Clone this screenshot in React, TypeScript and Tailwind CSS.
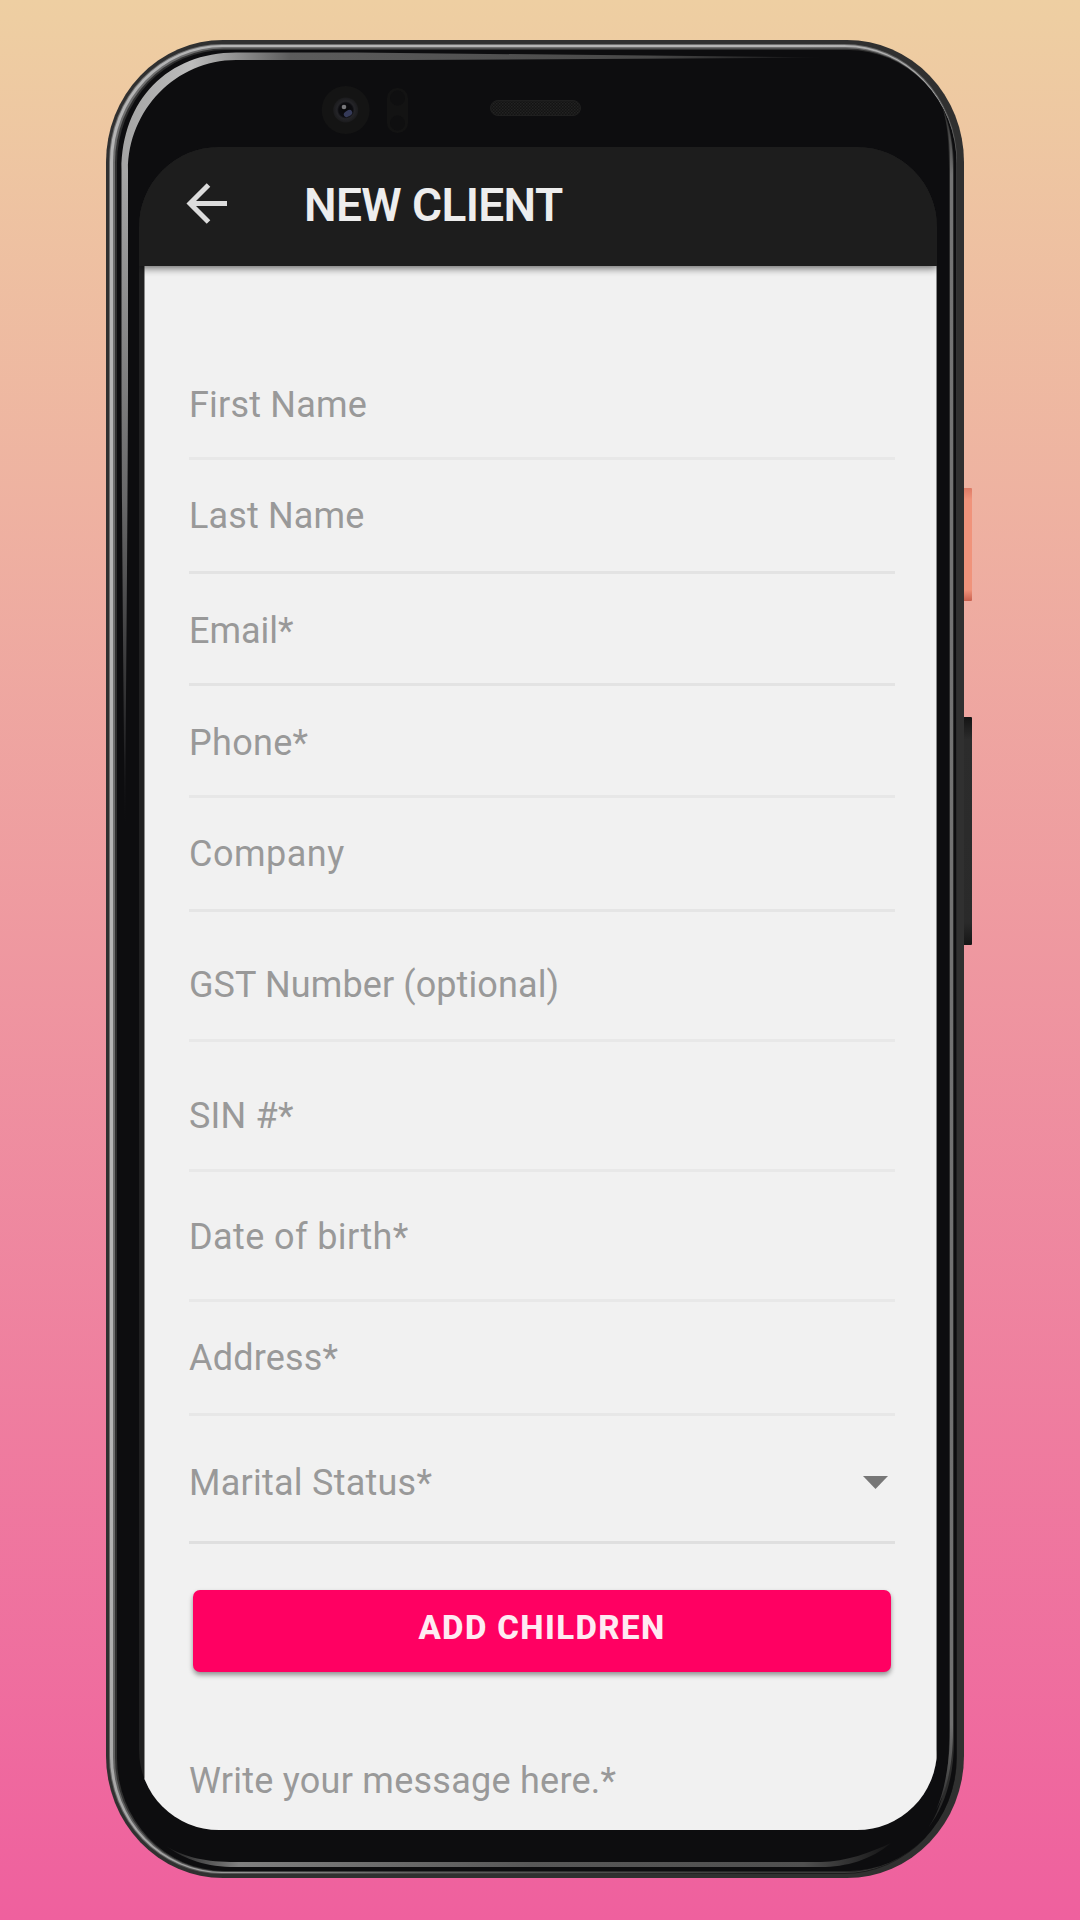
import React from 'react';

type Field = { label: string; row: string; text: string; select?: boolean };

const fields: Field[] = [
  { label: 'First Name', row: 'h-[194px] pb-[31px] border-[#e8e8e8]', text: 'tracking-[0.2px]' },
  { label: 'Last Name', row: 'h-[114px] pb-[34px] border-[#e3e3e3]', text: 'tracking-[0.15px]' },
  { label: 'Email*', row: 'h-[112px] pb-[31px] border-[#e3e3e3]', text: 'tracking-[0px]' },
  { label: 'Phone*', row: 'h-[112px] pb-[31px] border-[#e7e7e7]', text: 'tracking-[0.3px]' },
  { label: 'Company', row: 'h-[114px] pb-[34px] border-[#e5e5e5]', text: 'tracking-[0.5px]' },
  { label: 'GST Number (optional)', row: 'h-[130px] pb-[33px] border-[#e8e8e8]', text: 'tracking-[0.1px]' },
  { label: 'SIN #*', row: 'h-[130px] pb-[32px] border-[#e8e8e8]', text: 'tracking-[0.2px]' },
  { label: 'Date of birth*', row: 'h-[130px] pb-[41px] border-[#e8e8e8]', text: 'tracking-[0.4px]' },
  { label: 'Address*', row: 'h-[114px] pb-[34px] border-[#e7e7e7]', text: 'tracking-[0.2px]' },
  { label: 'Marital Status*', row: 'h-[128px] pb-[37px] border-[#dfdfdf]', text: 'tracking-[0.25px]', select: true },
];

function PhoneShell() {
  return (
    <svg className="absolute inset-0 h-full w-full overflow-visible" viewBox="0 0 858 1838" fill="none">
      <defs>
        <linearGradient id="rimLight" x1="0" y1="1400" x2="700" y2="1750" gradientUnits="userSpaceOnUse">
          <stop offset="0" stopColor="#b4b4b4" />
          <stop offset=".35" stopColor="#a0a0a0" />
          <stop offset=".6" stopColor="#626262" />
          <stop offset="1" stopColor="#3c3c3c" />
        </linearGradient>
        <linearGradient id="rimMid" x1="0" y1="1400" x2="700" y2="1750" gradientUnits="userSpaceOnUse">
          <stop offset="0" stopColor="#6e6e6e" />
          <stop offset=".5" stopColor="#505050" />
          <stop offset="1" stopColor="#1c1c1c" />
        </linearGradient>
        <linearGradient id="glowTop" x1="15" y1="0" x2="722" y2="0" gradientUnits="userSpaceOnUse">
          <stop offset="0" stopColor="#a4a4a4" />
          <stop offset=".1" stopColor="#bcbcbc" />
          <stop offset=".24" stopColor="#5c5c5c" />
          <stop offset=".75" stopColor="#484848" />
          <stop offset="1" stopColor="#0d0d0f" />
        </linearGradient>
        <linearGradient id="glowFade" x1="0" y1="130" x2="0" y2="790" gradientUnits="userSpaceOnUse">
          <stop offset="0" stopColor="#0d0d0f" stopOpacity="0" />
          <stop offset=".5" stopColor="#0d0d0f" stopOpacity=".4" />
          <stop offset="1" stopColor="#0d0d0f" />
        </linearGradient>
        <linearGradient id="glowRight" x1="0" y1="66" x2="0" y2="1788" gradientUnits="userSpaceOnUse">
          <stop offset="0" stopColor="#2a2a2a" />
          <stop offset=".04" stopColor="#747474" />
          <stop offset=".94" stopColor="#707070" />
          <stop offset=".97" stopColor="#484848" />
          <stop offset="1" stopColor="#1a1a1b" />
        </linearGradient>
        <linearGradient id="glowBottom" x1="60" y1="0" x2="785" y2="0" gradientUnits="userSpaceOnUse">
          <stop offset="0" stopColor="#1a1a1b" />
          <stop offset=".1" stopColor="#808080" />
          <stop offset=".5" stopColor="#585858" />
          <stop offset=".88" stopColor="#505050" />
          <stop offset="1" stopColor="#141415" />
        </linearGradient>
        <linearGradient id="powerKey" x1="0" y1="448" x2="0" y2="561" gradientUnits="userSpaceOnUse">
          <stop offset="0" stopColor="#de7b66" />
          <stop offset=".1" stopColor="#f0937b" />
          <stop offset=".9" stopColor="#f0937b" />
          <stop offset="1" stopColor="#c9604f" />
        </linearGradient>
        <linearGradient id="volumeKey" x1="0" y1="677" x2="0" y2="905" gradientUnits="userSpaceOnUse">
          <stop offset="0" stopColor="#141414" />
          <stop offset=".1" stopColor="#2c2c2c" />
          <stop offset=".9" stopColor="#2a2a2a" />
          <stop offset="1" stopColor="#161616" />
        </linearGradient>
        <radialGradient id="lens">
          <stop offset="0" stopColor="#08080a" />
          <stop offset=".55" stopColor="#0c0c10" />
          <stop offset=".7" stopColor="#242428" />
          <stop offset="1" stopColor="#1b1b1d" />
        </radialGradient>
        <pattern id="mesh" width="3" height="3" patternUnits="userSpaceOnUse">
          <rect width="3" height="3" fill="#131313" />
          <rect width="1.5" height="1.5" fill="#232323" />
          <rect x="1.5" y="1.5" width="1.5" height="1.5" fill="#1f1f1f" />
        </pattern>
      </defs>

      <rect x="857" y="448" width="9" height="113" rx="1" fill="url(#powerKey)" />
      <rect x="857" y="677" width="9" height="228" rx="1" fill="url(#volumeKey)" />

      <rect width="858" height="1838" rx="117" ry="122" fill="#303030" />
      <rect x="3" y="4" width="848" height="1830" rx="113" ry="118" fill="url(#rimMid)" />
      <rect x="4" y="5" width="846" height="1828" rx="112" ry="117" fill="url(#rimLight)" />
      <rect x="7" y="7" width="842.500" height="1825" rx="110" ry="115" fill="url(#rimMid)" />
      <rect x="9" y="8.500" width="841" height="1823" rx="109" ry="114" fill="#303030" />
      <rect x="11" y="10" width="839.500" height="1821" rx="108" ry="113" fill="#0d0d0f" />

      <path d="M19 790C17 600 16 500 15.500 350V130C15.500 60 62 12.500 130 12.500H250L722 17.500L300 20H130C70 20 22 70 22 130V350C21.500 500 20 650 19 790Z" fill="url(#glowTop)" />
      <rect x="14" y="130" width="10" height="662" fill="url(#glowFade)" />
      <path d="M836 66C842 85 843 105 843 130V1700C843 1740 835 1770 822 1788C840 1765 848 1735 848 1700V130C848 105 844 85 836 66Z" fill="#2c2c2c" />
      <path d="M837 70C843 88 844 105 844 130V1690C844 1725 838 1752 830 1770C841 1750 847 1725 847 1690V130C847 105 844 88 837 70Z" fill="url(#glowRight)" />
      <path d="M60 1806C80 1818 100 1822 130 1822H715C740 1822 765 1812 785 1803C765 1820 740 1827 715 1827H130C100 1827 80 1820 60 1806Z" fill="url(#glowBottom)" />

      <circle cx="239.700" cy="70" r="24" fill="#141414" />
      <circle cx="239.700" cy="70" r="12.500" fill="url(#lens)" />
      <ellipse cx="242" cy="73.500" rx="4.500" ry="3" fill="#353a58" transform="rotate(-30 242 73.500)" />
      <circle cx="238" cy="67" r="2.300" fill="#77777b" />
      <rect x="281" y="48" width="21" height="45" rx="10" fill="#131313" />
      <circle cx="291.500" cy="58" r="7.500" fill="#0f0f10" />
      <circle cx="291.500" cy="83" r="7.500" fill="#0f0f10" />
      <rect x="384.500" y="60.500" width="90" height="15" rx="7.500" fill="url(#mesh)" stroke="#1f1f1f" />
    </svg>
  );
}

export default function App() {
  return (
    <main className="flex h-[1920px] w-[1080px] items-start overflow-hidden bg-linear-to-b/srgb from-[#eecfa2] to-[#ef609e] pt-[40px] pl-[106px]">
      <div className="relative h-[1838px] w-[858px] pt-[107px] pl-[33px]">
        <PhoneShell />
        <section className="relative flex h-[1683px] w-[798px] flex-col overflow-hidden rounded-[80px] bg-[#202021] font-[Roboto,sans-serif]">
          <header className="relative flex h-[119px] shrink-0 items-center bg-[#1d1d1d] pl-[46px] shadow-[0_2px_8px_rgba(0,0,0,0.6)]">
            <svg className="mt-[-7px] h-[44px] w-[44px]" viewBox="0 0 44 44" fill="none" stroke="#dcdcdc" strokeWidth="5">
              <path d="M42 22.500H6M23.500 4L5 22.500L23.500 41" />
            </svg>
            <h1 className="mt-[-3px] ml-[75px] text-[46px] font-semibold tracking-[-0.6px] text-[#ededed]">NEW CLIENT</h1>
          </header>
          <div className="ml-[5px] flex-1 border-x border-[#8a8a8a] bg-[#f1f1f1] pl-[44px]">
            {fields.map((f) => (
              <div key={f.label} className={`flex w-[706px] items-end justify-between border-b-3 ${f.row}`}>
                <span className={`text-[36px] leading-[42px] text-[#999] ${f.text}`}>{f.label}</span>
                {f.select && (
                  <svg className="mr-[7px] mb-[15px] h-[13px] w-[25px]" viewBox="0 0 25 13">
                    <path d="M0 0H25L12.500 13Z" fill="#777" />
                  </svg>
                )}
              </div>
            ))}
            <button className="mt-[46px] ml-[4px] flex h-[82px] w-[698px] items-center justify-center rounded-[7px] bg-[#ff0062] pb-[7px] text-[33px] font-extrabold tracking-[1.4px] text-[#ffeaf2] shadow-[0_3px_5px_rgba(0,0,0,0.4)]">
              ADD CHILDREN
            </button>
            <p className="mt-[88px] text-[36px] leading-[42px] tracking-[0.25px] text-[#999]">Write your message here.*</p>
          </div>
        </section>
      </div>
    </main>
  );
}
